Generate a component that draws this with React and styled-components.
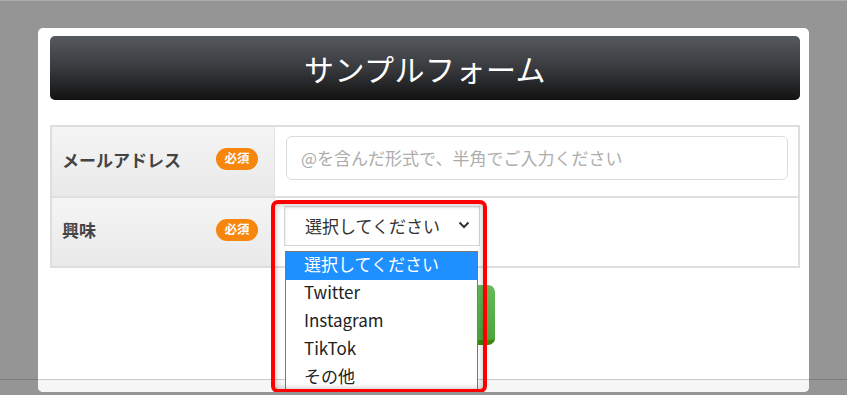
import React from 'react';
import styled, { createGlobalStyle } from 'styled-components';

const GlobalStyle = createGlobalStyle`
  html, body {
    margin: 0;
    padding: 0;
    background: #959595;
  }
  body {
    font-family: 'Noto Sans CJK JP', 'Noto Sans', sans-serif;
    overflow: hidden;
  }
`;

const options = ['選択してください', 'Twitter', 'Instagram', 'TikTok', 'その他'];

const Page = styled.div`
  height: 395px;
  box-sizing: border-box;
  border-top: 1px solid #ababab;
  padding: 27px 38px 0 38px;
  background: linear-gradient(to bottom, transparent 378px, #7c7c7c 378px, #7c7c7c 379px, transparent 379px);
`;

const Card = styled.div`
  width: 771px;
  background: #fff;
  border-radius: 5px;
  overflow: hidden;
  display: flex;
  flex-direction: column;
`;

const CardBody = styled.div`
  padding: 8px 9px 34px 12px;
  display: flex;
  flex-direction: column;
  align-items: stretch;
`;

const Title = styled.h1`
  margin: 0;
  height: 64px;
  border-radius: 5px;
  background: linear-gradient(to bottom, #56595e 0%, #383a3e 50%, #121212 100%);
  color: #fff;
  font-weight: 400;
  font-size: 30px;
  letter-spacing: 0.5px;
  display: flex;
  align-items: center;
  justify-content: center;
`;

const FormTable = styled.div`
  margin-top: 25px;
  width: 750px;
  box-sizing: border-box;
  border: 2px solid #dedede;
  display: grid;
  grid-template-columns: 223px 1fr;
`;

const LabelCell = styled.div`
  box-sizing: border-box;
  padding: 0 16px 5px 10px;
  display: flex;
  align-items: center;
  justify-content: space-between;
  background: linear-gradient(to bottom, #f5f5f5, #e9e9e9);
  border-right: 1px solid #e4e4e4;
  border-bottom: ${p => (p.$last ? 'none' : '2px solid #dedede')};
  height: ${p => (p.$last ? '68px' : '71px')};
  font-size: 17px;
  font-weight: 700;
  color: #444;
`;

const DataCell = styled.div`
  position: relative;
  box-sizing: border-box;
  padding: ${p => (p.$last ? '8px 9px' : '9px 11px')};
  border-bottom: ${p => (p.$last ? 'none' : '2px solid #dedede')};
`;

const Badge = styled.span`
  display: inline-flex;
  align-items: center;
  justify-content: center;
  width: 42px;
  height: 22px;
  border-radius: 11px;
  background: #f7860d;
  color: #fff;
  font-size: 12.5px;
  font-weight: 700;
  line-height: 1;
  padding-bottom: 1px;
  box-sizing: border-box;
`;

const TextInput = styled.input`
  width: 502px;
  height: 44px;
  box-sizing: border-box;
  border: 1px solid #dcdcdc;
  border-radius: 6px;
  padding: 0 14px 2px;
  font-family: inherit;
  font-size: 17px;
  outline: none;
  &::placeholder {
    color: #adadad;
  }
`;

const SelectBox = styled.div`
  width: 196px;
  height: 40px;
  box-sizing: border-box;
  border: 1px solid #d6d6d6;
  box-shadow: inset 1px 1px 2px rgba(0, 0, 0, 0.08);
  background: #fff;
  display: flex;
  align-items: center;
  justify-content: space-between;
  padding: 0 9px 2px 20px;
  font-size: 17px;
  color: #333;
`;

const OptionList = styled.ul`
  position: absolute;
  left: 10px;
  top: 53px;
  width: 193px;
  margin: 0;
  padding: 0;
  list-style: none;
  box-sizing: border-box;
  border: 1px solid #7a7a7a;
  background: #fff;
  z-index: 3;
`;

const OptionItem = styled.li`
  height: 28px;
  line-height: 23px;
  padding-left: 18px;
  font-size: 17px;
  color: ${p => (p.$active ? '#fff' : '#222')};
  background: ${p => (p.$active ? '#1e90ff' : 'transparent')};
  white-space: nowrap;
`;

const Highlight = styled.div`
  position: absolute;
  left: -4px;
  top: 2px;
  width: 216px;
  height: 193px;
  box-sizing: border-box;
  border: 4px solid #ff0000;
  border-radius: 7px;
  box-shadow: inset 0 0 6px rgba(0, 0, 0, 0.28);
  pointer-events: none;
  z-index: 4;
`;

const Actions = styled.div`
  margin-top: 17px;
  display: flex;
  justify-content: center;
`;

const SubmitButton = styled.button`
  width: 140px;
  height: 60px;
  border: none;
  border-radius: 7px;
  border-bottom: 5px solid #3a8a0e;
  background: linear-gradient(to bottom, #64ba5a, #4ca53d);
  color: #fff;
  font-family: inherit;
  font-size: 18px;
  font-weight: 700;
`;

const CardFooter = styled.div`
  height: 12px;
  border-top: 1px solid #c9c9c9;
  background: #f6f6f6;
`;

const Chevron = () => (
  <svg width="12" height="8" viewBox="0 0 12 8">
    <path d="M1.5 1.5 L6 6 L10.5 1.5" fill="none" stroke="#333" strokeWidth="2" />
  </svg>
);

export default function App() {
  return (
    <>
      <GlobalStyle />
      <Page>
        <Card>
          <CardBody>
            <Title>サンプルフォーム</Title>
            <FormTable>
              <LabelCell>
                メールアドレス
                <Badge>必須</Badge>
              </LabelCell>
              <DataCell>
                <TextInput placeholder="@を含んだ形式で、半角でご入力ください" />
              </DataCell>
              <LabelCell $last>
                興味
                <Badge>必須</Badge>
              </LabelCell>
              <DataCell $last>
                <SelectBox>
                  <span>選択してください</span>
                  <Chevron />
                </SelectBox>
                <OptionList>
                  {options.map((o, i) => (
                    <OptionItem key={o} $active={i === 0}>{o}</OptionItem>
                  ))}
                </OptionList>
                <Highlight />
              </DataCell>
            </FormTable>
            <Actions>
              <SubmitButton>送信する</SubmitButton>
            </Actions>
          </CardBody>
          <CardFooter />
        </Card>
      </Page>
    </>
  );
}
